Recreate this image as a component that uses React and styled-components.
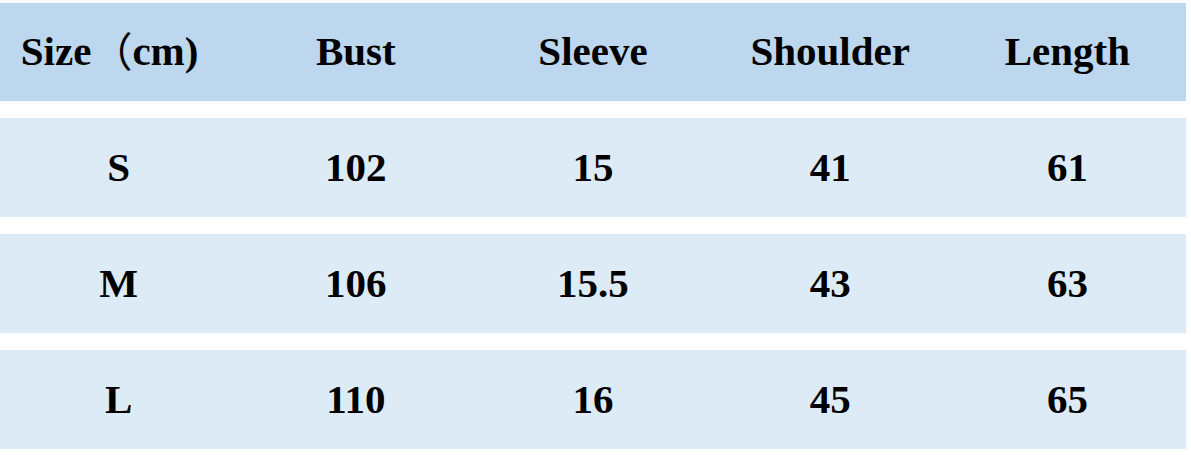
import React from "react";
import styled, { createGlobalStyle } from "styled-components";

const GlobalStyle = createGlobalStyle`
  body {
    margin: 0;
    background: #ffffff;
  }
`;

const Table = styled.div`
  width: 1186px;
  padding-top: 3px;
  display: flex;
  flex-direction: column;
  gap: 17px;
  font-family: "Liberation Serif", "Noto Sans CJK SC", serif;
  font-weight: 700;
  font-size: 41px;
  color: #000;
`;

const Row = styled.div`
  display: grid;
  grid-template-columns: repeat(5, 1fr);
  height: ${(p) => (p.$head ? "98px" : "99px")};
  background: ${(p) => (p.$head ? "#bdd7ee" : "#ddebf7")};
`;

const Cell = styled.div`
  display: flex;
  align-items: center;
  justify-content: center;
  padding-bottom: 2px;
  padding-right: ${(p) => (p.$shift ? "18px" : "0")};
  white-space: nowrap;
`;

const Paren = styled.span`
  font-family: "Noto Sans CJK SC", sans-serif;
  font-weight: 400;
  position: relative;
  top: -2px;
`;

const rows = [
  ["S", "102", "15", "41", "61"],
  ["M", "106", "15.5", "43", "63"],
  ["L", "110", "16", "45", "65"],
];

export default function App() {
  return (
    <>
      <GlobalStyle />
      <Table>
        <Row $head>
          <Cell $shift>
            Size<Paren>（</Paren>cm)
          </Cell>
          <Cell>Bust</Cell>
          <Cell>Sleeve</Cell>
          <Cell>Shoulder</Cell>
          <Cell>Length</Cell>
        </Row>
        {rows.map((r) => (
          <Row key={r[0]}>
            {r.map((v, i) => (
              <Cell key={i}>{v}</Cell>
            ))}
          </Row>
        ))}
      </Table>
    </>
  );
}
